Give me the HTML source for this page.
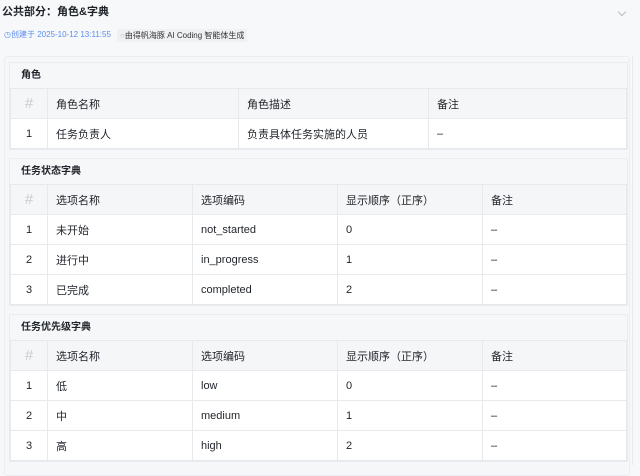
<!DOCTYPE html>
<html><head><meta charset="utf-8"><style>
*{box-sizing:border-box;margin:0;padding:0}
body{width:640px;height:465px;overflow:hidden;background:#f7f8fa;font-family:"Liberation Sans","Noto Sans CJK SC",sans-serif;color:#1f2329;position:relative}
.title{position:absolute;left:2px;top:3px;font-size:11px;font-weight:bold}
.chev{position:absolute;left:619px;top:9px;width:6px;height:6px;border-right:1px solid #b8bcc4;border-bottom:1px solid #b8bcc4;transform:rotate(45deg)}
.meta{position:absolute;top:29px;font-size:8px}
.m1{left:4px;color:#5b8def}
.m2{left:117px;color:#333;background:#f0f1f3;padding:1px 3px}
.outer{position:absolute;left:4px;top:56px;width:626px;height:420px;background:#f6f7f9;border:1px solid #eceef1;border-radius:3px}
.scroll{position:absolute;left:632px;top:56px;width:1px;height:409px;background:#e8e9ec}
.card{position:absolute;left:9px;width:619px;background:#f6f7f9;border:1px solid #e9ebee;border-radius:2px}
.card h4{font-size:10px;font-weight:bold;height:25px;line-height:25px;padding-left:11px;color:#1f2329}
table{border-collapse:collapse;width:100%;font-size:11px;table-layout:fixed}
td,th{border:1px solid #e8e9ec;height:30px;padding-left:8px;text-align:left;font-weight:normal;color:#1f2329}
th{background:#f5f6f8}
tbody td{background:#fff}
td.n,th.n{text-align:center;padding:0}
th.n{color:#c8cbd0;font-size:15px}
</style></head><body>
<div class="title">公共部分：角色&amp;字典</div>
<div class="chev"></div>
<div class="meta m1">◷创建于 2025-10-12 13:11:55</div>
<div class="meta m2"><span style="color:#bbb">○</span>由得帆海豚 AI Coding 智能体生成</div>
<div class="outer"></div>
<div class="scroll"></div>
<div class="card" style="top:62px">
<h4>角色</h4>
<table><colgroup><col style="width:37px"><col style="width:191px"><col style="width:190px"><col></colgroup>
<thead><tr><th class="n">#</th><th>角色名称</th><th>角色描述</th><th>备注</th></tr></thead>
<tbody><tr><td class="n">1</td><td>任务负责人</td><td>负责具体任务实施的人员</td><td>–</td></tr></tbody></table>
</div>
<div class="card" style="top:158px">
<h4>任务状态字典</h4>
<table><colgroup><col style="width:37px"><col style="width:145px"><col style="width:145px"><col style="width:145px"><col></colgroup>
<thead><tr><th class="n">#</th><th>选项名称</th><th>选项编码</th><th>显示顺序（正序）</th><th>备注</th></tr></thead>
<tbody>
<tr><td class="n">1</td><td>未开始</td><td>not_started</td><td>0</td><td>–</td></tr>
<tr><td class="n">2</td><td>进行中</td><td>in_progress</td><td>1</td><td>–</td></tr>
<tr><td class="n">3</td><td>已完成</td><td>completed</td><td>2</td><td>–</td></tr>
</tbody></table>
</div>
<div class="card" style="top:314px">
<h4>任务优先级字典</h4>
<table><colgroup><col style="width:37px"><col style="width:145px"><col style="width:145px"><col style="width:145px"><col></colgroup>
<thead><tr><th class="n">#</th><th>选项名称</th><th>选项编码</th><th>显示顺序（正序）</th><th>备注</th></tr></thead>
<tbody>
<tr><td class="n">1</td><td>低</td><td>low</td><td>0</td><td>–</td></tr>
<tr><td class="n">2</td><td>中</td><td>medium</td><td>1</td><td>–</td></tr>
<tr><td class="n">3</td><td>高</td><td>high</td><td>2</td><td>–</td></tr>
</tbody></table>
</div>
</body></html>
